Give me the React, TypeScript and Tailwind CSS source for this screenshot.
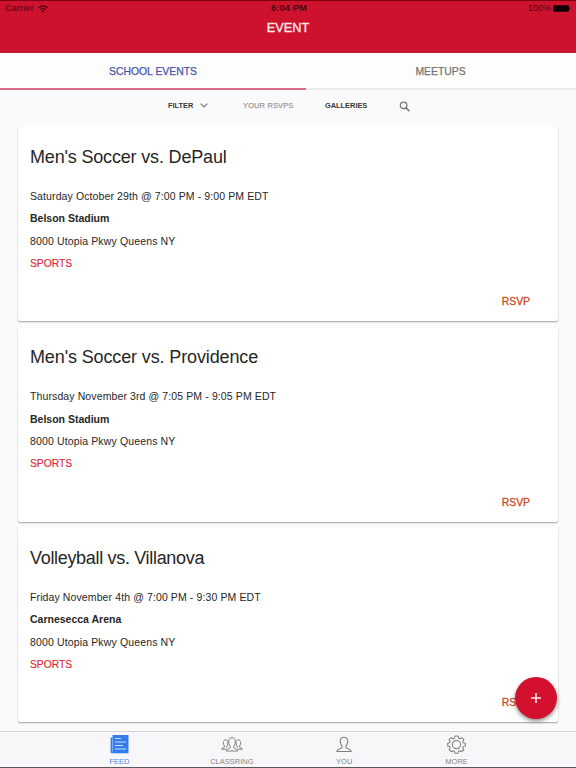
import React, { JSX } from "react";

type SchoolEvent = {
  title: string;
  date: string;
  venue: string;
  address: string;
  category: string;
  titleClass?: string;
};

const events: SchoolEvent[] = [
  {
    title: "Men's Soccer vs. DePaul",
    date: "Saturday October 29th @ 7:00 PM - 9:00 PM EDT",
    venue: "Belson Stadium",
    address: "8000 Utopia Pkwy Queens NY",
    category: "SPORTS",
  },
  {
    title: "Men's Soccer vs. Providence",
    date: "Thursday November 3rd @ 7:05 PM - 9:05 PM EDT",
    venue: "Belson Stadium",
    address: "8000 Utopia Pkwy Queens NY",
    category: "SPORTS",
    titleClass: "tracking-[-0.13px]",
  },
  {
    title: "Volleyball vs. Villanova",
    date: "Friday November 4th @ 7:00 PM - 9:30 PM EDT",
    venue: "Carnesecca Arena",
    address: "8000 Utopia Pkwy Queens NY",
    category: "SPORTS",
    titleClass: "tracking-[-0.32px]",
  },
];

export default function App() {
  return (
    <div className="relative flex h-[768px] w-[576px] flex-col overflow-hidden bg-[#fafafb] font-['Liberation_Sans',Arial,sans-serif] text-[#262626]">
      {/* Header */}
      <header className="h-[53px] shrink-0 border-t border-[#7a0010] border-b border-b-[#bb2038] bg-[#ce112d]">
        <div className="grid h-[15px] grid-cols-3 items-center pr-[5px] pl-[5px] text-[#4d0510]">
          <div className="flex items-center gap-[4px]">
            <span className="text-[9px] tracking-[0.2px]">Carrier</span>
            <WifiIcon />
          </div>
          <span className="pl-[2px] text-center text-[9.5px] font-bold">6:04 PM</span>
          <div className="flex items-center justify-end gap-[2px]">
            <span className="text-[9px]">100%</span>
            <BatteryIcon />
          </div>
        </div>
        <h1 className="mt-[4px] text-center text-[12.7px] leading-[17px] text-[#fde8ea] [-webkit-text-stroke:0.35px]">
          EVENT
        </h1>
      </header>

      {/* Tabs */}
      <nav className="flex h-[37px] shrink-0 bg-[#fdfdfb] text-[10.4px] [-webkit-text-stroke:0.25px]">
        <button className="w-[306px] border-b-2 border-[#dc6a88] pt-[3px] text-[#4a55ae]">
          SCHOOL EVENTS
        </button>
        <button className="flex-1 border-b-2 border-[#ececec] pr-[1px] pt-[3px] text-[#757575]">
          MEETUPS
        </button>
      </nav>

      {/* Filters */}
      <div className="flex h-[37px] shrink-0 items-start pt-[10px] pl-[168px] text-[7.4px] leading-[11px] font-bold text-[#383838]">
        <div className="flex w-[75px] items-center gap-[7px]">
          FILTER
          <svg width="8" height="5" viewBox="0 0 8 5" fill="none" stroke="#777" strokeWidth="1.2">
            <path d="M.7.7 4 4 7.3.7" />
          </svg>
        </div>
        <span className="w-[82px] font-normal tracking-[0.2px] text-[#9b9b9b] [-webkit-text-stroke:0.25px]">
          YOUR RSVPS
        </span>
        <span className="w-[74px]">GALLERIES</span>
        <svg className="mt-[1px]" width="12" height="12" viewBox="0 0 12 12" fill="none" stroke="#777">
          <circle cx="4.600" cy="4.400" r="3.300" strokeWidth="1.2" />
          <path d="m7 6.900 3.500 3.400" strokeWidth="1.6" />
        </svg>
      </div>

      {/* Event list */}
      <main className="flex min-h-0 flex-1 flex-col gap-[6.6px] overflow-hidden px-[18px]">
        {events.map((event) => (
          <EventCard key={event.title} event={event} />
        ))}
      </main>

      {/* Bottom bar */}
      <footer className="flex h-[37px] shrink-0 justify-center border-t border-b border-t-[#d4d4d6] border-b-[#59555a] bg-[#f7f7fa]">
        <FooterTab icon={<FeedIcon />} label="FEED" active />
        <FooterTab icon={<GroupIcon />} label="CLASSRING" />
        <FooterTab icon={<PersonIcon />} label="YOU" />
        <FooterTab icon={<GearIcon />} label="MORE" />
      </footer>

      {/* Floating add button */}
      <button
        aria-label="Add event"
        className="absolute top-[677px] left-[515px] flex h-[42px] w-[42px] items-center justify-center rounded-full bg-[#d3102e] shadow-[0_2px_4px_rgba(0,0,0,0.45)]"
      >
        <svg width="10" height="10" viewBox="0 0 10 10" stroke="#ffe9ec" strokeWidth="1.6">
          <path d="M5 0v10M0 5h10" />
        </svg>
      </button>
    </div>
  );
}

const EventCard = ({ event }: { event: SchoolEvent }) => (
  <article className="flex h-[194px] shrink-0 flex-col rounded-b-[2px] bg-white px-[12px] pt-[19.5px] text-[10.5px] leading-[22.5px] shadow-[0_1px_1.5px_rgba(0,0,0,0.35)]">
    <h2
      className={`mb-[17px] text-[18px] leading-[21px] ${
        event.titleClass ?? "tracking-[-0.17px]"
      }`}
    >
      {event.title}
    </h2>
    <p className="tracking-[0.11px]">{event.date}</p>
    <p className="font-bold">{event.venue}</p>
    <p className="tracking-[0.14px]">{event.address}</p>
    <p className="pt-[0.6px] text-[10.3px] text-[#dd2c33] [-webkit-text-stroke:0.15px]">
      {event.category}
    </p>
    <button className="mt-[16px] mr-[16px] self-end text-[10.4px] text-[#cf4a26] [-webkit-text-stroke:0.3px]">
      RSVP
    </button>
  </article>
);

const FooterTab = ({
  icon,
  label,
  active = false,
}: {
  icon: JSX.Element;
  label: string;
  active?: boolean;
}) => (
  <div
    className={`flex w-[112.4px] flex-col items-center pt-[3px] text-[7.5px] leading-[9px] ${
      active ? "text-[#4187e8]" : "text-[#858585]"
    }`}
  >
    {icon}
    <span className="mt-[2px]">{label}</span>
  </div>
);

const WifiIcon = () => (
  <svg width="10" height="8" viewBox="0 0 9 7" fill="none" stroke="currentColor" strokeWidth="1.2">
    <path d="M.5 2.4a5.8 5.8 0 0 1 8 0M2 4.1a3.6 3.6 0 0 1 5 0" />
    <path d="M4.5 6.7 3.2 5.3a1.9 1.9 0 0 1 2.6 0z" fill="currentColor" stroke="none" />
  </svg>
);

const BatteryIcon = () => (
  <svg width="18" height="7" viewBox="0 0 18 7" fill="#100003">
    <rect y=".3" width="16" height="6.400" rx="1.3" />
    <path d="M16.500 2.200c1.400.3 1.400 2.300 0 2.600z" />
  </svg>
);

const FeedIcon = () => (
  <svg width="19" height="20" viewBox="0 0 19 20">
    <path d="M2.500 0H18.500v18.200H1.800A1.200 1.200 0 0 1 .6 17V2.400h1.900z" fill="#347bec" />
    <path d="M2.700 2.400v14" stroke="#a9caf8" strokeWidth=".7" />
    <path d="M5 3.500h6M5 7h11M5 10.500h8M5 14h11" stroke="#c9defb" strokeWidth="1" />
  </svg>
);

const GroupIcon = () => (
  <svg width="22" height="20" viewBox="0 0 22 20" fill="none" stroke="#808080" strokeWidth="1" strokeLinejoin="round">
    <path d="M9.300 12.300c0-1.500-1.600-2.400-1.600-5.600 0-2.600 1.200-4 3.300-4s3.300 1.400 3.300 4c0 3.200-1.600 4.100-1.600 5.600 0 1.300 3.700 1.200 4 3.700H5.300c.3-2.500 4-2.400 4-3.700z" />
    <path d="M6 13c-.7-.5-.5-1.100 0-2 .5-.8.900-1.900.900-3.200 0-1.900-.9-2.900-2.300-2.900S2.300 5.900 2.300 7.800c0 1.900 1.200 2.800 1.200 4.100 0 1-2.600.7-2.900 2.400h4.800" />
    <path d="M16 13c.7-.5.5-1.100 0-2-.5-.8-.9-1.900-.9-3.200 0-1.900.9-2.900 2.300-2.900s2.300 1 2.300 2.900c0 1.900-1.200 2.800-1.200 4.100 0 1 2.600.7 2.900 2.400h-4.800" />
  </svg>
);

const PersonIcon = () => (
  <svg width="16" height="20" viewBox="0 0 16 20" fill="none" stroke="#808080" strokeWidth="1.1" strokeLinejoin="round">
    <path d="M6.200 12c0-1.600-2-2.600-2-5.700 0-2.700 1.500-4.100 3.800-4.100s3.800 1.400 3.800 4.100c0 3.100-2 4.100-2 5.700 0 2.200 5.100 1.300 5.400 4.500H.8c.3-3.200 5.400-2.300 5.400-4.500z" />
  </svg>
);

const GearIcon = () => (
  <svg width="19" height="20" viewBox="0 0 20 20" fill="none" stroke="#808080" strokeWidth="1.1" strokeLinejoin="round">
    <path d="M8.400.6h3.200l.6 2.200 1.400.6 2-1.200 2.100 2.200-1.100 2 .5 1.300 2.200.5v2.800l-2.200.7-.6 1.300 1.200 2-2.200 2.100-2-1.100-1.400.6-.5 2H8.400l-.6-2-1.400-.6-2 1.100-2.200-2.100 1.200-2-.6-1.300-2.100-.7V8.200l2.200-.5.5-1.300-1.200-2 2.200-2.200 2 1.200L7.800 2.800z" />
    <circle cx="10" cy="9.600" r="4.300" />
  </svg>
);
